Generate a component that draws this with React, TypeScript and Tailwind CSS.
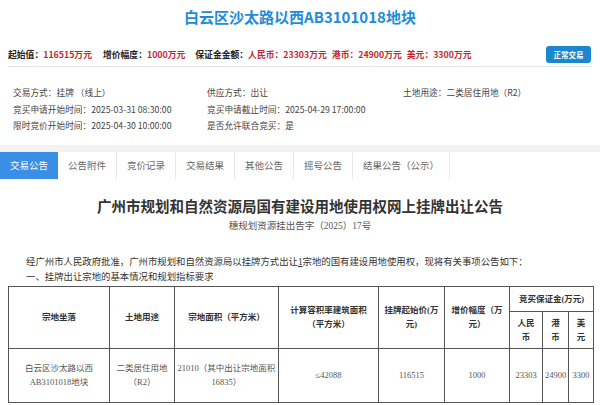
import React from 'react';

const sans = "font-['Noto_Sans_CJK_SC',sans-serif]";
const serif = "font-['Liberation_Serif','Noto_Sans_CJK_SC',serif]";

const tabs = ['交易公告', '公告附件', '竞价记录', '交易结果', '其他公告', '摇号公告', '结果公告（公示）'];

const info: [string, string][][] = [
  [
    ['交易方式：', '挂牌 （线上）'],
    ['供应方式：', '出让'],
    ['土地用途：', '二类居住用地（R2）'],
  ],
  [
    ['竞买申请开始时间：', '2025-03-31 08:30:00'],
    ['竞买申请截止时间：', '2025-04-29 17:00:00'],
  ],
  [
    ['限时竞价开始时间：', '2025-04-30 10:00:00'],
    ['是否允许联合竞买：', '是'],
  ],
];

export default function App() {
  const th = 'border border-[#555] text-center font-bold text-[#333] leading-[14px] px-[2px]';
  const td = 'border border-[#555] text-center text-[#555] leading-[14px] px-0 whitespace-nowrap';

  return (
    <div className={`w-[600px] h-[405px] overflow-hidden bg-white ${sans}`}>
      {/* title */}
      <div className="h-[34px] flex items-center justify-center">
        <h1 className="text-[15px] font-bold text-[#228bd6] leading-[18px]">白云区沙太路以西AB3101018地块</h1>
      </div>

      {/* price row */}
      <div className="mx-[8px] mt-[12px] pb-[3px] border-b border-[#e6e6e6] flex items-center justify-between">
        <div className="flex items-center text-[8.8px] font-bold leading-[17px] whitespace-nowrap">
          <span className="text-[#222]">起始值：</span>
          <span className="text-[#c1272d]">116515万元</span>
          <span className="text-[#222] ml-[11px]">增价幅度：</span>
          <span className="text-[#c1272d]">1000万元</span>
          <span className="text-[#222] ml-[10px]">保证金金额：</span>
          <span className="text-[#c1272d]">人民币：23303万元</span>
          <span className="text-[#c1272d] ml-[5px]">港币：24900万元</span>
          <span className="text-[#c1272d] ml-[5px]">美元：3300万元</span>
        </div>
        <button className="h-[17px] w-[45px] rounded-[3px] bg-[#1b87cf] text-white text-[7.5px] font-bold flex items-center justify-center mr-[1px]">
          正常交易
        </button>
      </div>

      {/* info grid */}
      <div className="pl-[13px] pt-[18px] pb-[10px] text-[8.7px] text-[#444] leading-[16.5px]">
        {info.map((row, i) => (
          <div key={i} className="grid grid-cols-[194px_196px_1fr]">
            {row.map(([k, v]) => (
              <div key={k} className="whitespace-nowrap">
                {k}
                {v}
              </div>
            ))}
          </div>
        ))}
      </div>

      {/* gray band + tabs */}
      <div className="h-[7px] bg-[#f2f2f2]" />
      <div className="flex h-[27px] bg-white">
        {tabs.map((t, i) => (
          <div
            key={t}
            className={
              i === 0
                ? 'px-[10px] flex items-center bg-[#3a8ee6] text-white text-[9.5px] whitespace-nowrap'
                : 'px-[10px] flex items-center border-r border-[#e8e8e8] text-[#666] text-[9.5px] whitespace-nowrap'
            }
          >
            {t}
          </div>
        ))}
      </div>

      {/* announcement */}
      <div className={serif}>
        <h2 className="mt-[18px] text-center text-[14.5px] font-bold text-[#333] leading-[20px]">
          广州市规划和自然资源局国有建设用地使用权网上挂牌出让公告
        </h2>
        <p className="mt-[2px] text-center text-[9.5px] text-[#555] leading-[14px]">穗规划资源挂出告字（2025）17号</p>

        <div className="mt-[22px] text-[9.4px] text-[#333] leading-[15px]">
          <p className="pl-[26px] whitespace-nowrap">
            经广州市人民政府批准，广州市规划和自然资源局以挂牌方式出让<span className="underline">1</span>
            宗地的国有建设用地使用权，现将有关事项公告如下：
          </p>
          <p className="pl-[26px] whitespace-nowrap">一、挂牌出让宗地的基本情况和规划指标要求</p>
        </div>

        <table className="ml-[8px] mt-[1px] w-[585px] table-fixed border-collapse text-[8.5px]">
          <colgroup>
            <col className="w-[101px]" />
            <col className="w-[65px]" />
            <col className="w-[104px]" />
            <col className="w-[100px]" />
            <col className="w-[66px]" />
            <col className="w-[65px]" />
            <col className="w-[33px]" />
            <col className="w-[26px]" />
            <col className="w-[25px]" />
          </colgroup>
          <thead>
            <tr className="h-[25px]">
              <th rowSpan={2} className={th}>宗地坐落</th>
              <th rowSpan={2} className={th}>土地用途</th>
              <th rowSpan={2} className={th}>宗地面积（平方米）</th>
              <th rowSpan={2} className={th}>
                计算容积率建筑面积
                <br />
                （平方米）
              </th>
              <th rowSpan={2} className={th}>
                挂牌起始价(万
                <br />
                元)
              </th>
              <th rowSpan={2} className={th}>
                增价幅度（万
                <br />
                元）
              </th>
              <th colSpan={3} className={th}>竞买保证金(万元)</th>
            </tr>
            <tr className="h-[37px]">
              <th className={th}>
                人民
                <br />币
              </th>
              <th className={th}>
                港<br />币
              </th>
              <th className={th}>
                美<br />元
              </th>
            </tr>
          </thead>
          <tbody>
            <tr className="h-[54px]">
              <td className={td}>
                白云区沙太路以西
                <br />
                AB3101018地块
              </td>
              <td className={td}>
                二类居住用地
                <br />
                （R2）
              </td>
              <td className={td}>
                21010（其中出让宗地面积
                <br />
                16835）
              </td>
              <td className={td}>≤42088</td>
              <td className={td}>116515</td>
              <td className={td}>1000</td>
              <td className={td}>23303</td>
              <td className={td}>24900</td>
              <td className={td}>3300</td>
            </tr>
          </tbody>
        </table>
      </div>
    </div>
  );
}
